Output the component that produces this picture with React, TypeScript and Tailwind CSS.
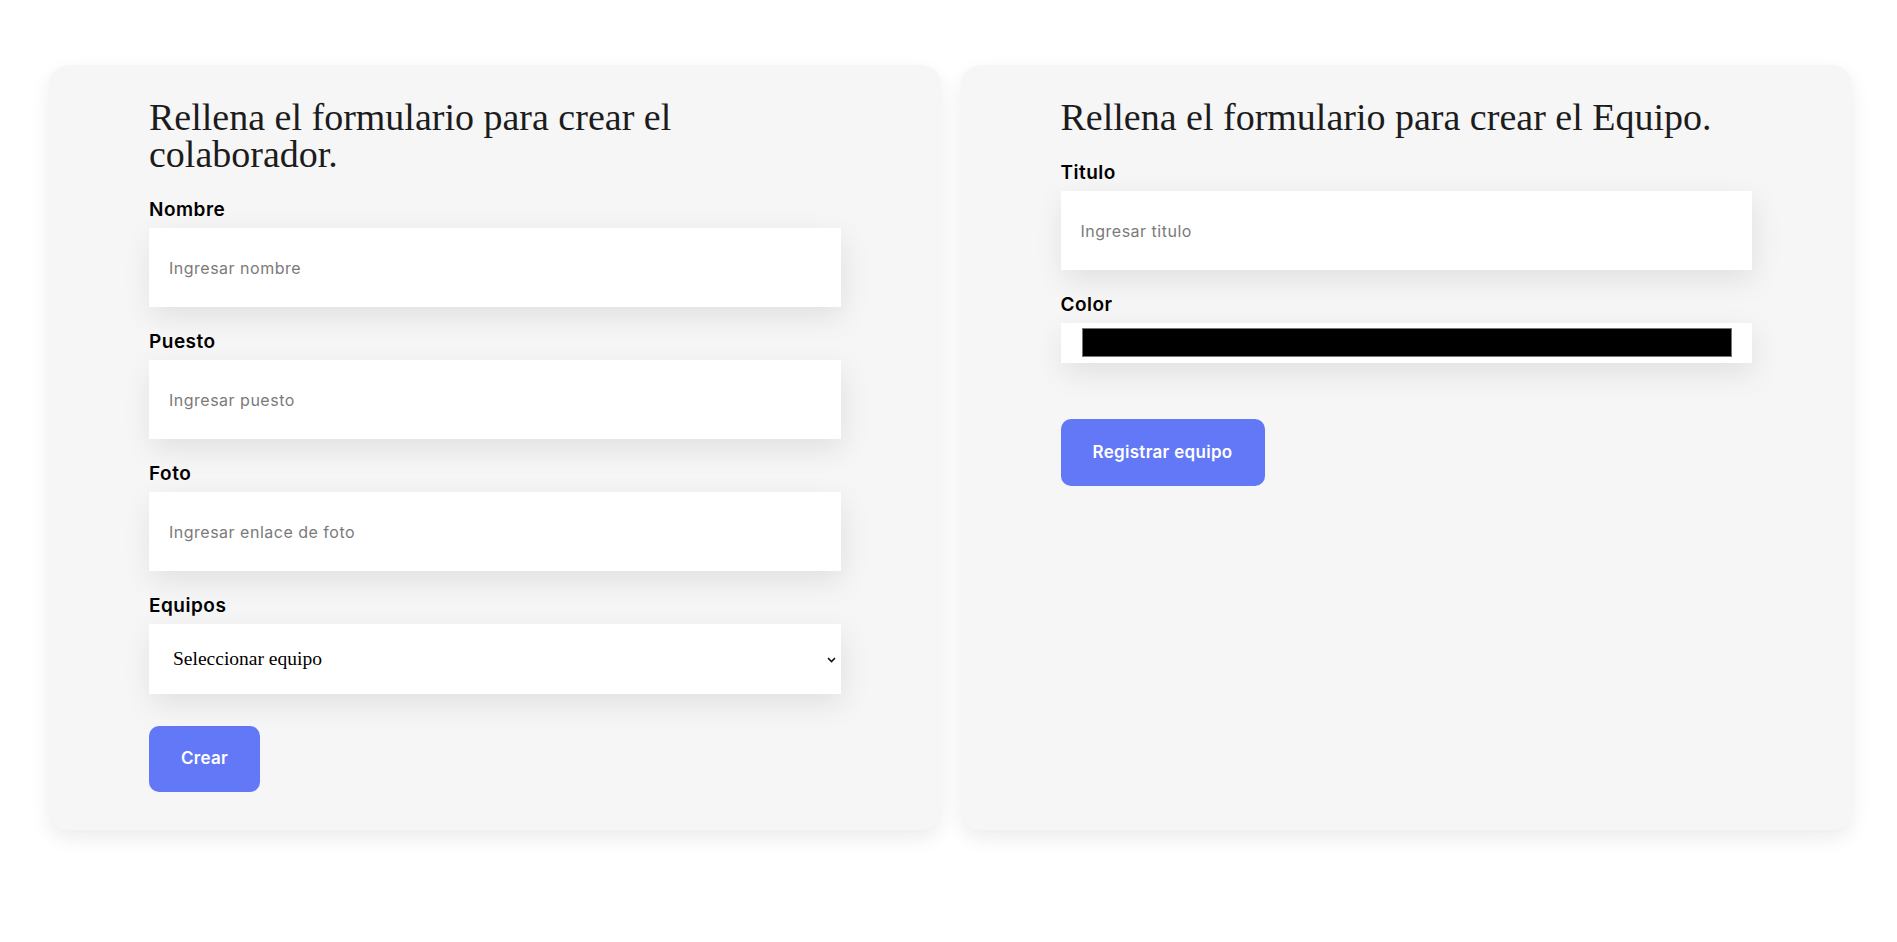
import React from "react";

const serif = "font-['Liberation_Serif',serif]";
const sans = "font-['Inter',sans-serif]";
const labelCls = `${sans} text-[19px] leading-[22px] font-semibold tracking-[0.5px] text-black`;

function Field({ label, placeholder }: { label: string; placeholder: string }) {
  return (
    <div className="flex flex-col">
      <label className={labelCls}>{label}</label>
      <input
        placeholder={placeholder}
        className={`${sans} mt-[7px] h-[79px] w-full bg-white px-[20px] text-[16px] tracking-[0.5px] text-black placeholder:text-[#7a7a7a] outline-none shadow-[2px_10px_30px_rgba(0,0,0,0.09)]`}
      />
    </div>
  );
}

function Card({ children }: { children: React.ReactNode }) {
  return (
    <div className="rounded-[20px] bg-[#f6f6f6] px-[100px] pt-[34px] pb-[38px] shadow-[0_8px_20px_rgba(0,0,0,0.08)]">
      {children}
    </div>
  );
}

export default function App() {
  return (
    <div className="min-h-screen bg-white pt-[65px] pl-[49px] pr-[45px]">
      <div className="grid grid-cols-2 gap-[20px]">
        <Card>
          <form className="flex flex-col" onSubmit={(e) => e.preventDefault()}>
            <h2 className={`${serif} text-[38px] leading-[37px] font-normal text-[#1c1c1c]`}>
              Rellena el formulario para crear el colaborador.
            </h2>
            <div className="mt-[26px] flex flex-col gap-[24px]">
              <Field label="Nombre" placeholder="Ingresar nombre" />
              <Field label="Puesto" placeholder="Ingresar puesto" />
              <Field label="Foto" placeholder="Ingresar enlace de foto" />
              <div className="flex flex-col">
                <label className={labelCls}>Equipos</label>
                <div className="relative mt-[7px]">
                  <select
                    defaultValue=""
                    className={`${serif} h-[70px] w-full appearance-none bg-white pl-[24px] text-[19.5px] text-black outline-none shadow-[2px_10px_30px_rgba(0,0,0,0.09)]`}
                  >
                    <option value="" disabled>
                      Seleccionar equipo
                    </option>
                    <option>Programación</option>
                    <option>Front End</option>
                    <option>Data Science</option>
                  </select>
                  <svg
                    className="pointer-events-none absolute right-[5px] top-[33px] h-[6px] w-[9px]"
                    viewBox="0 0 9 6"
                    fill="none"
                  >
                    <path d="M1 1l3.5 3.5L8 1" stroke="#111" strokeWidth="1.6" />
                  </svg>
                </div>
              </div>
            </div>
            <div className="mt-[32px]">
              <button
                type="submit"
                className={`${sans} h-[66px] rounded-[10px] bg-[#6278f7] px-[32px] text-[17px] font-semibold tracking-[0.3px] text-white`}
              >
                Crear
              </button>
            </div>
          </form>
        </Card>

        <Card>
          <form className="flex flex-col" onSubmit={(e) => e.preventDefault()}>
            <h2 className={`${serif} text-[38px] leading-[37px] font-normal text-[#1c1c1c]`}>
              Rellena el formulario para crear el Equipo.
            </h2>
            <div className="mt-[26px] flex flex-col gap-[24px]">
              <Field label="Titulo" placeholder="Ingresar titulo" />
              <div className="flex flex-col">
                <label className={labelCls}>Color</label>
                <div className="mt-[7px] h-[40px] bg-white pl-[21px] pr-[20px] pt-[5px] pb-[6px] shadow-[2px_10px_30px_rgba(0,0,0,0.09)]">
                  <div className="h-full w-full border border-[#767676] bg-black" />
                </div>
              </div>
            </div>
            <div className="mt-[56px]">
              <button
                type="submit"
                className={`${sans} h-[67px] rounded-[10px] bg-[#6278f7] px-[32px] text-[17px] font-semibold tracking-[0.3px] text-white`}
              >
                Registrar equipo
              </button>
            </div>
          </form>
        </Card>
      </div>
    </div>
  );
}
